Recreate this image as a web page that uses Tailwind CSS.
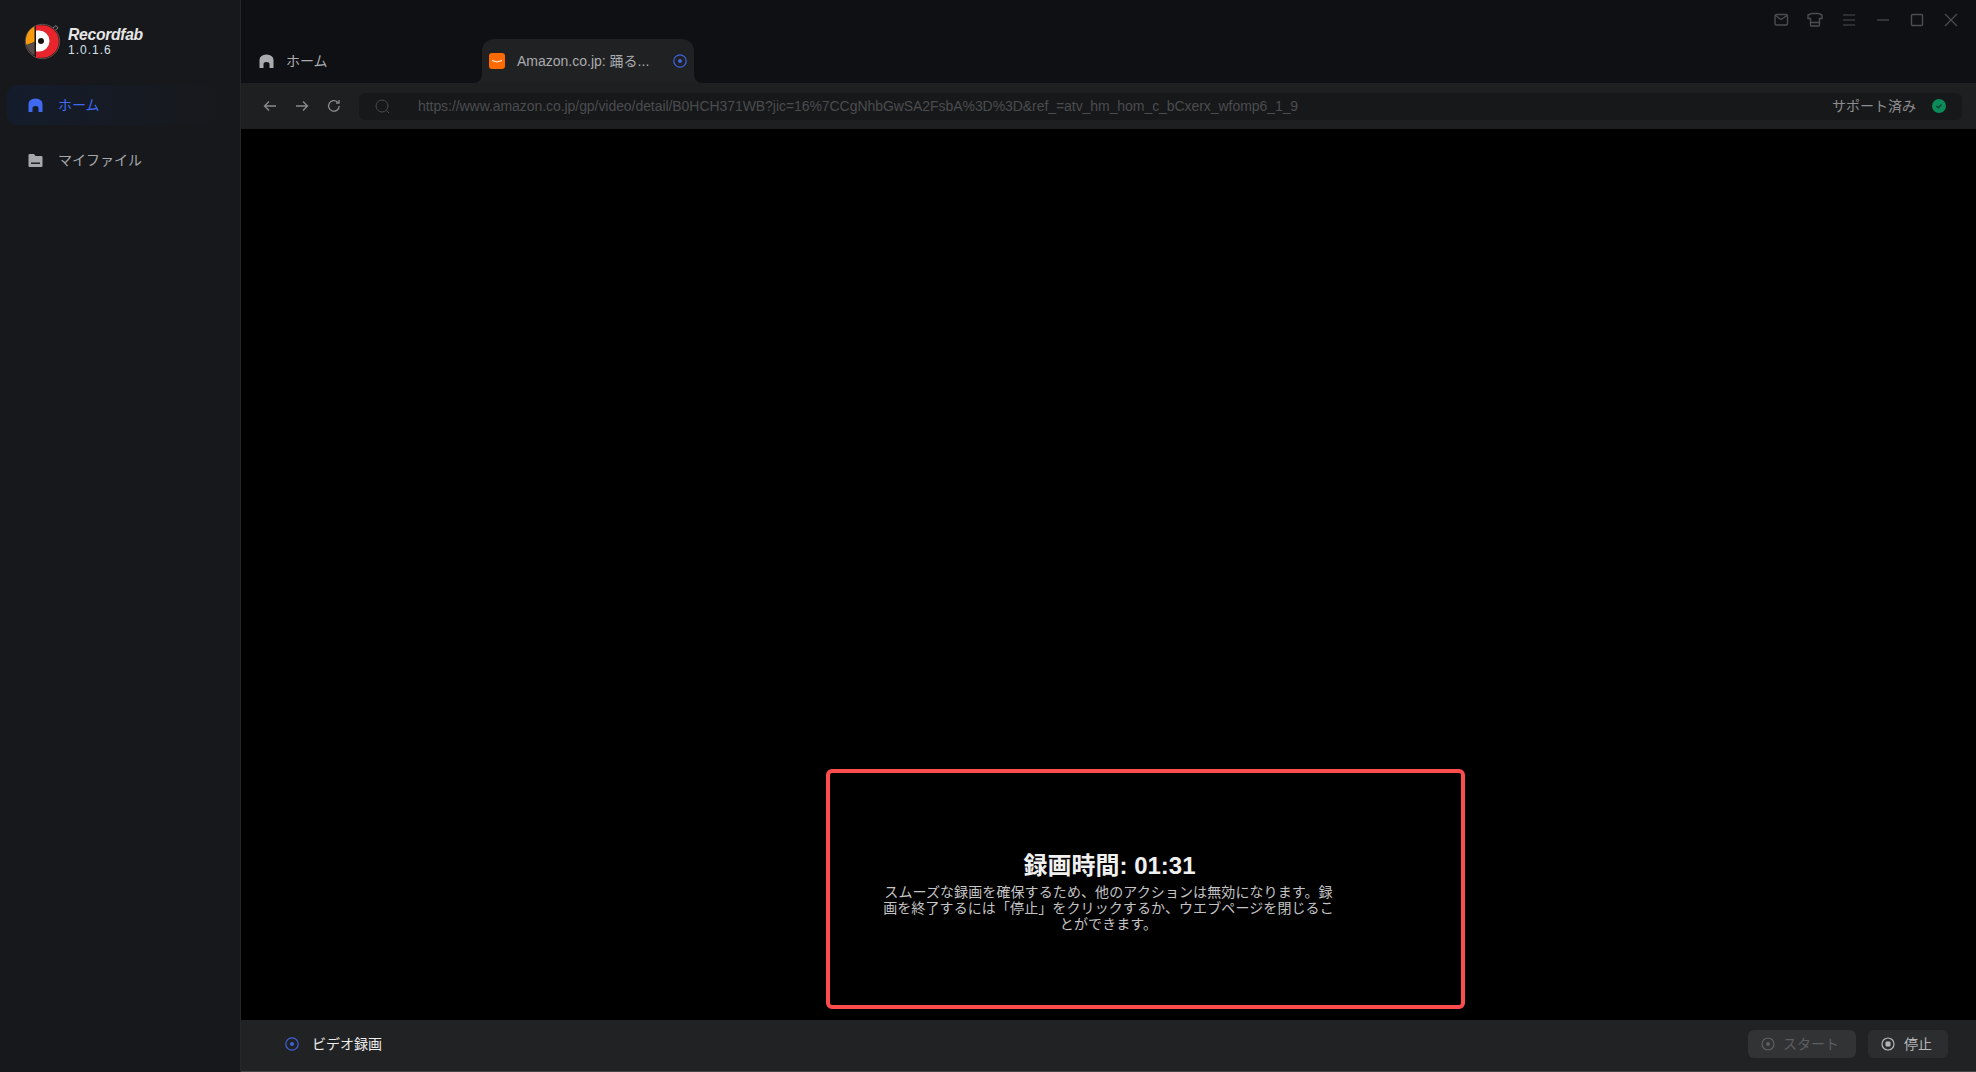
<!DOCTYPE html>
<html lang="ja"><head><meta charset="utf-8"><script src="https://cdn.jsdelivr.net/npm/@tailwindcss/browser@4"></script></head>
<body class="m-0 bg-black">
<div class="flex h-[1072px] w-[1976px] overflow-hidden bg-[#0f1013] font-['Liberation_Sans','Noto_Sans_CJK_JP',sans-serif]">
  <aside class="flex w-[240px] shrink-0 flex-col bg-[#17181b]">
    <div class="flex h-[85px] items-center pb-[3px] pl-[24px]">
      <svg width="37" height="37" viewBox="0 0 37 37" class="shrink-0">
        <circle cx="18.5" cy="18.5" r="17.2" fill="#1a1818" stroke="#5a5050" stroke-width="1"/>
        <path d="M10.5 3.5 A15.8 15.8 0 0 0 2.4 22 L10.5 19Z" fill="#f79a0e"/>
        <path d="M2.4 22 A15.8 15.8 0 0 0 10.5 32.5 V19Z" fill="#5a4c48"/>
        <path d="M12 2.2 H18.5 A16.3 16.3 0 0 1 18.5 34.8 H12Z" fill="#e8242c"/>
        <path d="M12 7.5 H15 A10.5 10.5 0 0 1 15 28.5 H12Z" fill="#fff"/>
        <circle cx="17" cy="18" r="3" fill="#1a1010"/>
        <path d="M29 5 L32 2.5 L34 5 L31.5 7" fill="none" stroke="#8a8080" stroke-width="1"/>
      </svg>
      <div class="ml-[7px] flex flex-col">
        <span class="text-[15.7px] leading-[17px] font-bold italic tracking-[-0.3px] text-[#e6e6e6]">Recordfab</span>
        <span class="text-[12px] leading-[14px] font-normal tracking-[1px] text-[#d5e0ea]">1.0.1.6</span>
      </div>
    </div>
    <nav class="flex flex-col gap-[15px] pl-[7px]">
      <a class="flex h-[40px] w-[220px] items-center gap-[15px] rounded-l-[10px] bg-gradient-to-r from-[#141c2c] to-[#17181b] pl-[21px] text-[14px] text-[#3f6af0]">
        <svg width="15" height="15" viewBox="0 0 15 15"><path d="M0.5 6 Q0.5 1 7.5 0.5 Q14.5 1 14.5 6 V14 H10.5 V10 Q10.5 8 7.5 8 Q4.5 8 4.5 10 V14 H0.5Z" fill="#3f6af0"/></svg>
        <span>ホーム</span>
      </a>
      <a class="flex h-[40px] w-[220px] items-center gap-[15px] pl-[21px] text-[14px] text-[#a5a7ab]">
        <svg width="15" height="15" viewBox="0 0 15 15"><path d="M0.5 2 Q0.5 1 1.5 1 H6 L7.5 3 H13.5 Q14.5 3 14.5 4 V13 Q14.5 14 13.5 14 H1.5 Q0.5 14 0.5 13Z" fill="#a5a7ab"/><rect x="3" y="9.5" width="9" height="1.4" fill="#17181b"/></svg>
        <span>マイファイル</span>
      </a>
    </nav>
  </aside>
  <div class="w-px shrink-0 bg-[#25262a]"></div>
  <main class="relative flex min-w-0 flex-1 flex-col">
    <header class="relative h-[83px] shrink-0 bg-[#0f1013]">
      <div class="flex h-[39px] items-center justify-end gap-[18px] pr-[17px] text-[#4c4d50]">
        <svg width="16" height="16" viewBox="0 0 16 16" fill="none" stroke="currentColor" stroke-width="1.4"><rect x="2" y="2.5" width="12.5" height="10.5" rx="1.5"/><path d="M2.5 3.5 L8 7.5 L14 3.5"/></svg>
        <svg width="16" height="16" viewBox="0 0 16 16" fill="none" stroke="currentColor" stroke-width="1.4"><path d="M4.5 1.5 H11.5 L15 3 V6.5 H12.5 V13 Q12.5 14 11.5 14 H4.5 Q3.5 14 3.5 13 V6.5 H1 V3Z M3.5 10.5 H12.5"/></svg>
        <svg width="16" height="16" viewBox="0 0 16 16" fill="none" stroke="currentColor" stroke-width="1.2"><path d="M2 3 H14 M2 8 H14 M2 13 H14"/></svg>
        <svg width="16" height="16" viewBox="0 0 16 16" fill="none" stroke="currentColor" stroke-width="1.2"><path d="M2 8 H14"/></svg>
        <svg width="16" height="16" viewBox="0 0 16 16" fill="none" stroke="currentColor" stroke-width="1.4"><rect x="2.5" y="2.5" width="11" height="11" rx="1"/></svg>
        <svg width="16" height="16" viewBox="0 0 16 16" fill="none" stroke="currentColor" stroke-width="1.2"><path d="M2 2 L14 14 M14 2 L2 14"/></svg>
      </div>
      <div class="absolute bottom-0 left-0 flex items-end">
        <div class="flex h-[44px] w-[241px] items-center gap-[12px] pl-[18px] text-[14px] text-[#a9abae]">
          <svg width="15" height="15" viewBox="0 0 15 15"><path d="M0.5 6 Q0.5 1 7.5 0.5 Q14.5 1 14.5 6 V14 H10.5 V10 Q10.5 8 7.5 8 Q4.5 8 4.5 10 V14 H0.5Z" fill="#a9abae"/></svg>
          <span>ホーム</span>
        </div>
        <div class="relative flex h-[44px] w-[212px] items-center rounded-t-[12px] bg-[#202123] pl-[7px] text-[14px] text-[#a9abae]">
          <svg width="8" height="8" viewBox="0 0 8 8" class="absolute bottom-0 -left-[8px]"><path d="M8 0 V8 H0 A8 8 0 0 0 8 0Z" fill="#202123"/></svg>
          <svg width="8" height="8" viewBox="0 0 8 8" class="absolute bottom-0 -right-[8px]"><path d="M0 0 V8 H8 A8 8 0 0 1 0 0Z" fill="#202123"/></svg>
          <svg width="16" height="16" viewBox="0 0 16 16" class="shrink-0"><rect width="16" height="16" rx="3" fill="#ff6a00"/><path d="M3 7.5 Q8 10.5 13 7.5" fill="none" stroke="#fff" stroke-width="1"/></svg>
          <span class="ml-[12px] w-[156px] whitespace-nowrap">Amazon.co.jp: 踊る...</span>
          <svg width="14" height="14" viewBox="0 0 14 14" class="shrink-0" fill="none"><circle cx="7" cy="7" r="6.2" stroke="#3f62dc" stroke-width="1.2"/><circle cx="7" cy="7" r="2" fill="#3f62dc"/></svg>
        </div>
      </div>
    </header>
    <div class="flex h-[46px] shrink-0 items-center bg-[#1e1f21] pl-[22px] pr-[14px]">
      <div class="flex w-[96px] shrink-0 items-center gap-[18px] text-[#8a8b8d]">
        <svg width="14" height="14" viewBox="0 0 14 14" fill="none" stroke="currentColor" stroke-width="1.3"><path d="M13 7 H1.5 M6 2.5 L1.5 7 L6 11.5"/></svg>
        <svg width="14" height="14" viewBox="0 0 14 14" fill="none" stroke="currentColor" stroke-width="1.3"><path d="M1 7 H12.5 M8 2.5 L12.5 7 L8 11.5"/></svg>
        <svg width="14" height="14" viewBox="0 0 14 14" fill="none" stroke="currentColor" stroke-width="1.3"><path d="M12.2 7 A5.3 5.3 0 1 1 10.5 3"/><path d="M12 1 V4 H9"/></svg>
      </div>
      <div class="flex h-[27px] flex-1 items-center rounded-[6px] bg-[#17181a] pr-[16px] pl-[16px]">
        <svg width="15" height="15" viewBox="0 0 15 15" fill="none" stroke="#4a4b4d" stroke-width="1"><circle cx="7" cy="7" r="6"/><path d="M11.5 11.5 L14 14"/></svg>
        <span class="ml-[28px] flex-1 truncate text-[14px] tracking-[-0.06px] text-[#4b4c4e]">https://www.amazon.co.jp/gp/video/detail/B0HCH371WB?jic=16%7CCgNhbGwSA2FsbA%3D%3D&amp;ref_=atv_hm_hom_c_bCxerx_wfomp6_1_9</span>
        <span class="text-[14px] text-[#8c8d8f]">サポート済み</span>
        <svg width="14" height="14" viewBox="0 0 14 14" class="ml-[16px]"><circle cx="7" cy="7" r="7" fill="#0b8a5a"/><path d="M4.5 7 L6.3 8.8 L9.5 5.5" fill="none" stroke="#1d3a30" stroke-width="1.3"/></svg>
      </div>
    </div>
    <section class="relative flex min-h-0 flex-1 flex-col items-center justify-end bg-black pb-[88px]">
      <h1 class="pl-[2px] text-[24px] leading-[30px] font-bold text-[#f0f0f0]">録画時間: 01:31</h1>
      <p class="mt-[3px] w-[456px] text-center text-[14px] leading-[16px] tracking-[0.1px] text-[#c4c4c4]">スムーズな録画を確保するため、他のアクションは無効になります。録画を終了するには「停止」をクリックするか、ウエブページを閉じることができます。</p>
      <div class="absolute top-[640px] left-[585px] h-[240px] w-[639px] rounded-[6px] border-4 border-[#ff4d4d]"></div>
    </section>
    <footer class="flex h-[52px] shrink-0 items-center border-b border-[#45464a] bg-[#212223] pb-[3px] pl-[44px] pr-[28px]">
      <svg width="14" height="14" viewBox="0 0 14 14" fill="none"><circle cx="7" cy="7" r="6.2" stroke="#3f62dc" stroke-width="1.2"/><circle cx="7" cy="7" r="2" fill="#3f62dc"/></svg>
      <span class="ml-[13px] flex-1 text-[14px] text-[#ededed]">ビデオ録画</span>
      <button class="flex h-[28px] w-[108px] items-center gap-[8px] rounded-[6px] bg-[#323335] pl-[13px] text-[14px] text-[#5d5e60]">
        <svg width="14" height="14" viewBox="0 0 14 14" fill="none"><circle cx="7" cy="7" r="6" stroke="#5d5e60" stroke-width="1.2"/><circle cx="7" cy="7" r="2" fill="#5d5e60"/></svg>
        <span>スタート</span>
      </button>
      <button class="ml-[12px] flex h-[28px] w-[80px] items-center gap-[9px] rounded-[6px] bg-[#2c2d2f] pl-[13px] text-[14px] text-[#b5b6b8]">
        <svg width="14" height="14" viewBox="0 0 14 14" fill="none"><circle cx="7" cy="7" r="6" stroke="#b5b6b8" stroke-width="1.2"/><rect x="4.5" y="4.5" width="5" height="5" rx="1" fill="#b5b6b8"/></svg>
        <span>停止</span>
      </button>
    </footer>
  </main>
</div>
</body></html>
